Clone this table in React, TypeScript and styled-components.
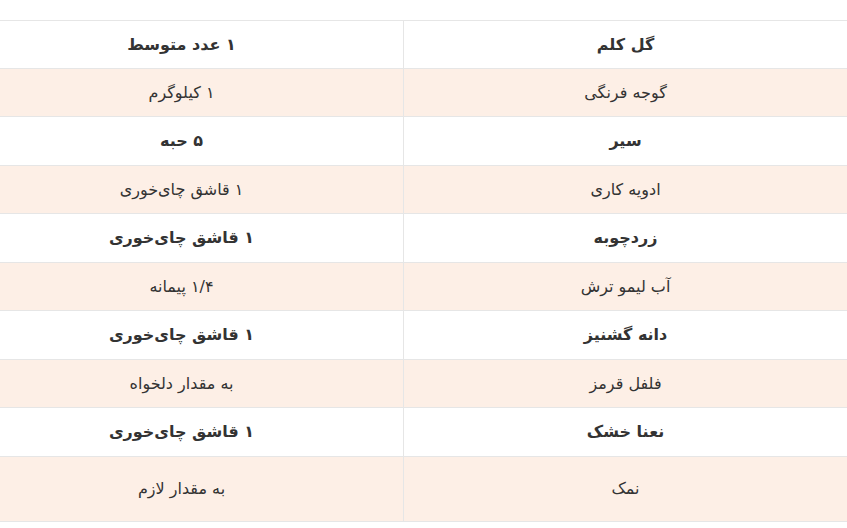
import React from 'react'
import styled, { createGlobalStyle } from 'styled-components'

const GlobalStyle = createGlobalStyle`
  html, body {
    margin: 0;
    padding: 0;
    background: #ffffff;
  }
  body {
    font-family: "DejaVu Sans", "Noto Sans", sans-serif;
  }
`

const Page = styled.div`
  width: 847px;
  height: 528px;
  overflow: hidden;
  direction: rtl;
  padding-top: 20px;
  box-sizing: border-box;
`

const Table = styled.table`
  width: 887px;
  border-collapse: collapse;
  table-layout: fixed;
  border-top: 1px solid #e6e6e6;
`

const Row = styled.tr<{ $shaded: boolean; $tall?: boolean }>`
  background: ${({ $shaded }) => ($shaded ? '#fdefe6' : '#ffffff')};
  height: ${({ $tall }) => ($tall ? '65px' : '48.5px')};
  border-bottom: 1px solid #e6e6e6;
  &:first-child {
    height: 47.5px;
  }
`

const Cell = styled.td<{ $bold: boolean }>`
  width: 50%;
  text-align: center;
  vertical-align: middle;
  padding: 0 12px;
  font-size: 16px;
  color: #333333;
  font-weight: ${({ $bold }) => ($bold ? 700 : 400)};
  & + & {
    border-right: 1px solid #e6e6e6;
  }
`

const rows: [string, string][] = [
  ['گل کلم', '۱ عدد متوسط'],
  ['گوجه فرنگی', '۱ کیلوگرم'],
  ['سیر', '۵ حبه'],
  ['ادویه کاری', '۱ قاشق چای‌خوری'],
  ['زردچوبه', '۱ قاشق چای‌خوری'],
  ['آب لیمو ترش', '۱/۴ پیمانه'],
  ['دانه گشنیز', '۱ قاشق چای‌خوری'],
  ['فلفل قرمز', 'به مقدار دلخواه'],
  ['نعنا خشک', '۱ قاشق چای‌خوری'],
  ['نمک', 'به مقدار لازم'],
]

export default function App() {
  return (
    <>
      <GlobalStyle />
      <Page>
        <Table>
          <tbody>
            {rows.map(([name, amount], i) => {
              const shaded = i % 2 === 1
              return (
                <Row key={i} $shaded={shaded} $tall={i === rows.length - 1}>
                  <Cell $bold={!shaded}>{name}</Cell>
                  <Cell $bold={!shaded}>{amount}</Cell>
                </Row>
              )
            })}
          </tbody>
        </Table>
      </Page>
    </>
  )
}
